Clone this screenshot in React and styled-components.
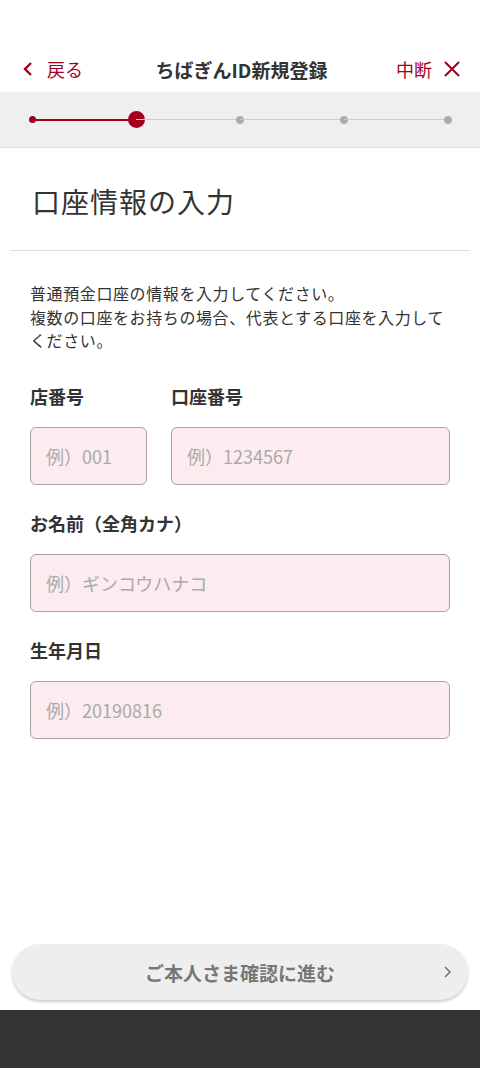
import styled, { createGlobalStyle } from "styled-components";

const RED = "#a3001e";

const GlobalStyle = createGlobalStyle`
    html, body {
        margin: 0;
        padding: 0;
        background: #fff;
    }
    body {
        font-family: "Noto Sans CJK JP", "Noto Sans", sans-serif;
        color: #333;
    }
    * {
        box-sizing: border-box;
    }
`;

const Page = styled.div`
    display: flex;
    flex-direction: column;
    min-height: 100vh;
`;

const Header = styled.header`
    display: grid;
    grid-template-columns: 1fr auto 1fr;
    align-items: center;
    height: 92px;
    padding: 46px 19px 0 22px;
`;

const HeaderLink = styled.a`
    display: flex;
    align-items: center;
    gap: ${(p) => p.$gap || "10px"};
    justify-self: ${(p) => (p.$right ? "end" : "start")};
    color: ${RED};
    font-size: 18px;
    text-decoration: none;
    cursor: pointer;
`;

const HeaderTitle = styled.h1`
    margin: 0;
    font-size: 19px;
    font-weight: bold;
    color: #333;
`;

const Stepper = styled.div`
    display: flex;
    align-items: center;
    height: 56px;
    padding: 0 32px;
    background: #efefef;
    border-bottom: 1px solid #dedede;
`;

const Node = styled.div`
    width: 0;
    display: flex;
    justify-content: center;
    align-items: center;
`;

const Dot = styled.span`
    flex-shrink: 0;
    width: ${(p) => p.$size}px;
    height: ${(p) => p.$size}px;
    border-radius: 50%;
    background: ${(p) => (p.$done ? RED : "#acacac")};
`;

const Segment = styled.div`
    flex: 1;
    height: ${(p) => (p.$done ? "2px" : "1px")};
    background: ${(p) => (p.$done ? RED : "#cccccc")};
`;

const Main = styled.main`
    flex: 1;
`;

const Title = styled.h2`
    margin: 0;
    padding: 33px 32px 29px;
    font-size: 28px;
    letter-spacing: 1px;
    font-weight: normal;
    line-height: 40px;
    color: #333;
`;

const Divider = styled.hr`
    margin: 0 10px;
    border: none;
    border-top: 1px solid #dddddd;
`;

const Form = styled.div`
    display: flex;
    flex-direction: column;
    padding: 31px 30px 0;
`;

const Lead = styled.p`
    margin: 0 0 31px;
    font-size: 16px;
    letter-spacing: 0.6px;
    line-height: 23.5px;
    color: #333;
`;

const Row = styled.div`
    display: flex;
    gap: 24px;
`;

const Field = styled.div`
    display: flex;
    flex-direction: column;
    width: ${(p) => p.$width || "auto"};
    flex: ${(p) => (p.$width ? "none" : 1)};
    margin-bottom: 26px;
`;

const Label = styled.label`
    font-size: 18px;
    font-weight: bold;
    line-height: 24px;
    color: #333;
    margin-bottom: 19px;
`;

const Input = styled.input`
    width: 100%;
    height: 58px;
    padding: 0 15px;
    border: 1px solid #aaa3a4;
    border-radius: 6px;
    background: #fcecef;
    font-family: inherit;
    font-size: 18px;
    color: #333;
    outline: none;

    &::placeholder {
        color: #aaaaaa;
    }
`;

const Footer = styled.div`
    padding: 0 12px 10px;
`;

const NextButton = styled.button`
    position: relative;
    width: 100%;
    height: 56px;
    border: none;
    border-radius: 28px;
    background: #eeeeee;
    box-shadow: 0 2px 3px rgba(0, 0, 0, 0.2);
    font-family: inherit;
    font-size: 19px;
    font-weight: bold;
    color: #777;
    cursor: pointer;

    svg {
        position: absolute;
        right: 15px;
        top: 50%;
        transform: translateY(-50%);
    }
`;

const NavBar = styled.div`
    height: 58px;
    background: #333333;
`;

const steps = [
    { size: 7, done: true },
    { size: 17, done: true },
    { size: 8, done: false },
    { size: 8, done: false },
    { size: 8, done: false },
];

const App = () => {
    return (
        <Page>
            <GlobalStyle />
            <Header>
                <HeaderLink $gap="13px">
                    <svg width="12" height="16" viewBox="0 0 12 16">
                        <path
                            d="M9 2 L3 8 L9 14"
                            fill="none"
                            stroke={RED}
                            strokeWidth="2.4"
                        />
                    </svg>
                    戻る
                </HeaderLink>
                <HeaderTitle>ちばぎんID新規登録</HeaderTitle>
                <HeaderLink $right $gap="11px">
                    中断
                    <svg width="18" height="18" viewBox="0 0 18 18">
                        <path
                            d="M2 2 L16 16 M16 2 L2 16"
                            fill="none"
                            stroke={RED}
                            strokeWidth="2"
                        />
                    </svg>
                </HeaderLink>
            </Header>

            <Stepper>
                {steps.map((s, i) => [
                    i > 0 && <Segment key={`s${i}`} $done={i <= 1} />,
                    <Node key={`n${i}`}>
                        <Dot $size={s.size} $done={s.done} />
                    </Node>,
                ])}
            </Stepper>

            <Main>
                <Title>口座情報の入力</Title>
                <Divider />
                <Form>
                    <Lead>
                        普通預金口座の情報を入力してください。
                        <br />
                        複数の口座をお持ちの場合、代表とする口座を入力してください。
                    </Lead>
                    <Row>
                        <Field $width="117px">
                            <Label>店番号</Label>
                            <Input placeholder="例）001" />
                        </Field>
                        <Field>
                            <Label>口座番号</Label>
                            <Input placeholder="例）1234567" />
                        </Field>
                    </Row>
                    <Field>
                        <Label>お名前（全角カナ）</Label>
                        <Input placeholder="例）ギンコウハナコ" />
                    </Field>
                    <Field>
                        <Label>生年月日</Label>
                        <Input placeholder="例）20190816" />
                    </Field>
                </Form>
            </Main>

            <Footer>
                <NextButton>
                    ご本人さま確認に進む
                    <svg width="10" height="14" viewBox="0 0 10 14">
                        <path
                            d="M2 2 L7 7 L2 12"
                            fill="none"
                            stroke="#777"
                            strokeWidth="1.6"
                        />
                    </svg>
                </NextButton>
            </Footer>
            <NavBar />
        </Page>
    );
};

export default App;
